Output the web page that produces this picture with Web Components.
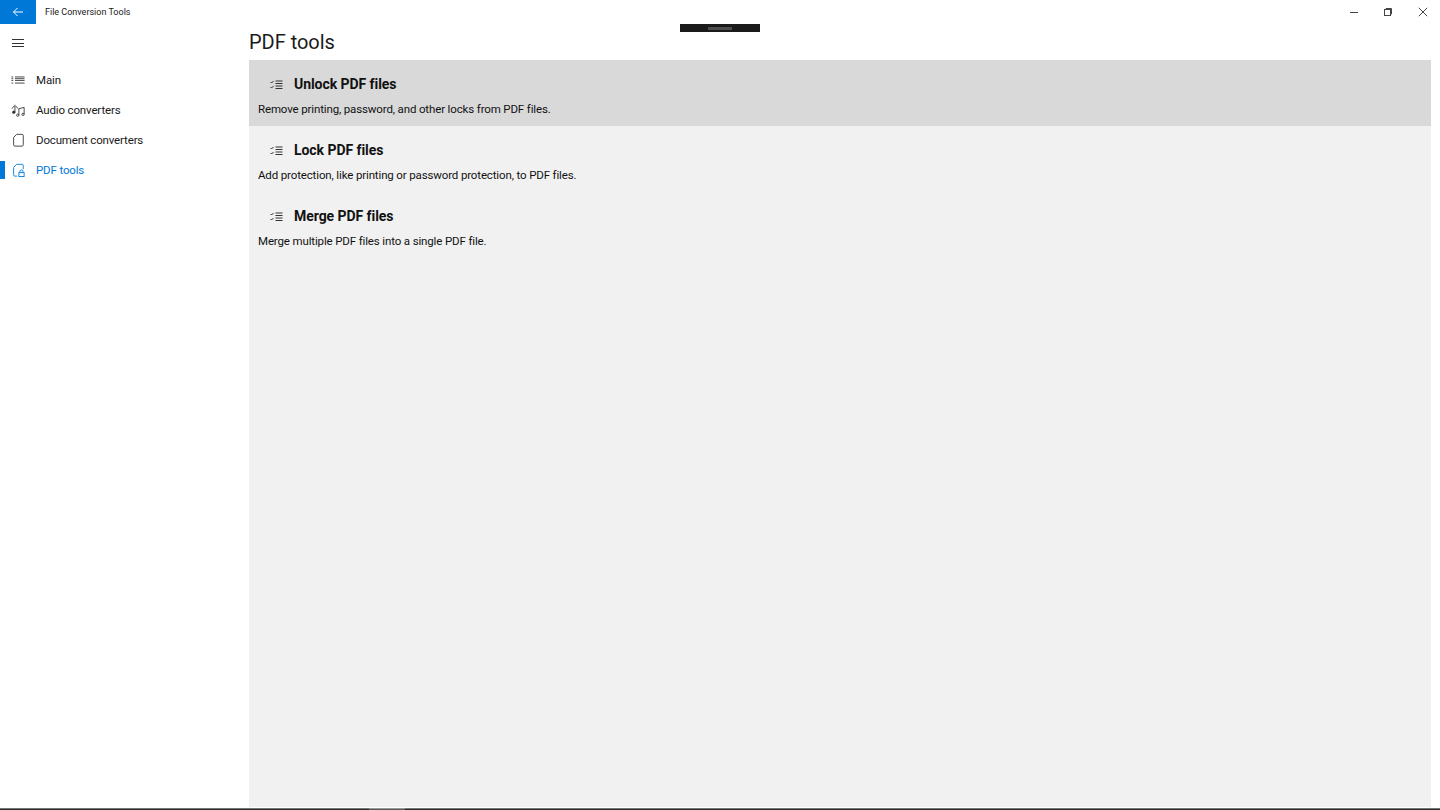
<!doctype html>
<html lang="en"><head><meta charset="utf-8"><title>File Conversion Tools</title>
<style>
html,body{margin:0;height:100%;background:#fff;overflow:hidden}
body{font-family:Roboto,"Open Sans",sans-serif;color:#1a1a1a}
</style></head><body>
<app-window>
  <title-bar slot="top" label="File Conversion Tools"></title-bar>
  <nav-pane slot="nav">
    <nav-item label="Main" icon="list"></nav-item>
    <nav-item label="Audio converters" icon="music"></nav-item>
    <nav-item label="Document converters" icon="doc"></nav-item>
    <nav-item label="PDF tools" icon="lock" selected></nav-item>
  </nav-pane>
  <tools-page slot="main" heading="PDF tools">
    <tool-row heading="Unlock PDF files" desc="Remove printing, password, and other locks from PDF files." active></tool-row>
    <tool-row heading="Lock PDF files" desc="Add protection, like printing or password protection, to PDF files."></tool-row>
    <tool-row heading="Merge PDF files" desc="Merge multiple PDF files into a single PDF file."></tool-row>
  </tools-page>
</app-window>
<script>
const ICONS={
 list:'<path d="M.5 4.500h2M.5 6.500h2M.5 8.500h2M.5 11.500h2M4.500 4.500h11M4.500 6.500h11M4.500 8.500h11M4.500 11.500h11"/>',
 music:'<path d="M4.500 2v8"/><circle cx="3.200" cy="10.500" r="1.800" fill="currentColor" stroke="none"/><path d="M1 6.500l2.500-3M8 6.500l-2.500-3"/><path d="M9 6.500l6-1.500v8M9 6.500v7.500"/><circle cx="7.700" cy="14" r="1.300"/><circle cx="13.700" cy="13" r="1.300"/>',
 doc:'<path d="M6.500 1.500h6a1.500 1.500 0 0 1 1.500 1.500v10.500a1.500 1.500 0 0 1-1.500 1.500h-8a1.500 1.500 0 0 1-1.500-1.500V5z"/>',
 lock:'<path d="M7 15H4.500A1.500 1.500 0 0 1 3 13.500V5l3.500-3.500h6A1.500 1.500 0 0 1 14 3v4"/><rect x="9" y="11" width="6" height="4.500"/><path d="M10.300 11V9.500a1.700 1.700 0 0 1 3.400 0V11"/>'
};
function def(name,html){customElements.define(name,class extends HTMLElement{
  connectedCallback(){if(this.shadowRoot)return;const r=this.attachShadow({mode:'open'});r.innerHTML=html(this);}
});}
def('app-window',()=>`<style>
:host{display:flex;flex-direction:column;width:1440px;height:810px;position:relative;overflow:hidden;background:#fff}
.top{flex:none}
.body{flex:1;min-height:0;display:flex;padding-bottom:1px}
.nav{flex:none;width:249px}
.main{flex:1;min-width:0;padding-right:9px}
.task{flex:none;height:2px;background:linear-gradient(#777 0 1px,#2b2b2b 1px);display:flex;padding-left:369px}
.task i{display:block;width:36px;background:linear-gradient(#999 0 1px,#5a5a5a 1px)}
.grip{position:absolute;left:680px;top:24px;width:80px;height:8px;background:#1a1a1a;display:flex;align-items:center;justify-content:center}
.grip i{display:block;width:24px;height:3px;background:#4d4d4d}
</style>
<div class="top"><slot name="top"></slot></div>
<div class="body"><div class="nav"><slot name="nav"></slot></div><div class="main"><slot name="main"></slot></div></div>
<div class="task"><i></i></div>
<div class="grip"><i></i></div>`);
def('title-bar',h=>`<style>
:host{display:flex;height:24px;align-items:stretch;color:#1a1a1a}
.back{width:36px;background:#0078d7;display:flex;align-items:center;justify-content:center}
.t{margin-left:9px;display:flex;align-items:center;flex:1;font-size:9px;padding-bottom:1px;box-sizing:border-box}
.b{width:34.500px;display:flex;align-items:center;justify-content:center;color:#444}
svg{display:block;fill:none;stroke:currentColor;stroke-width:1}
</style>
<div class="back"><svg width="12" height="12" viewBox="0 0 12 12" style="color:#fff"><path d="M11 6H1.500M5.500 2L1.500 6l4 4"/></svg></div>
<div class="t">${h.getAttribute('label')}</div>
<div class="b"><svg width="10" height="10" viewBox="0 0 10 10"><path d="M1 5.500h8"/></svg></div>
<div class="b"><svg width="10" height="10" viewBox="0 0 10 10"><rect x="1.500" y="2.500" width="6" height="6"/><path d="M3 2.500V1.500h5.500V7H7.500"/></svg></div>
<div class="b"><svg width="10" height="10" viewBox="0 0 10 10"><path d="M.8.8l8.400 8.400M9.200.8L.8 9.200"/></svg></div>`);
def('nav-pane',()=>`<style>
:host{display:block}
.menu{height:36px;display:flex;align-items:center;padding-left:12px}
.menu svg{display:block;fill:none;stroke:#333;stroke-width:1}
.list{padding-top:5px;display:flex;flex-direction:column}
</style>
<div class="menu"><svg width="12" height="12" viewBox="0 0 12 12" style="margin-top:1px"><path d="M0 2.500h12M0 6.500h12M0 9.500h12"/></svg></div>
<div class="list"><slot></slot></div>`);
def('nav-item',h=>{const s=h.hasAttribute('selected');return `<style>
:host{display:flex;align-items:center;height:30px;font-size:11.500px;letter-spacing:-.15px;position:relative;color:${s?'#0078d7':'#1a1a1a'}}
.ic{width:36px;flex:none;display:flex;justify-content:center}
svg{display:block;fill:none;stroke:currentColor;stroke-width:1;color:${s?'#0078d7':'#333'}}
.bar{position:absolute;left:0;top:6px;bottom:6px;width:5px;background:#0078d7}
</style>${s?'<div class="bar"></div>':''}
<div class="ic"><svg width="14" height="14" viewBox="0 0 16 16">${ICONS[h.getAttribute('icon')]}</svg></div>
<span>${h.getAttribute('label')}</span>`});
def('tools-page',h=>`<style>
:host{display:flex;flex-direction:column;height:100%}
h1{margin:0;height:36px;font-weight:400;font-size:20px;line-height:36px;letter-spacing:-.03px;color:#1a1a1a}
.list{flex:1;background:#f1f1f1;display:flex;flex-direction:column}
</style><h1>${h.getAttribute('heading')}</h1><div class="list"><slot></slot></div>`);
def('tool-row',h=>`<style>
:host{display:block;height:66px;box-sizing:border-box;padding-left:9px;background:${h.hasAttribute('active')?'#d9d9d9':'transparent'};color:#111}
.h{display:flex;align-items:center;height:36px;padding-top:12px;box-sizing:border-box;padding-left:12px}
svg{display:block;fill:none;stroke:#333;stroke-width:1;flex:none;margin-top:2px}
b{font-weight:700;font-size:14px;margin-left:11px;letter-spacing:-.06px}
p{margin:0;font-size:11.500px;letter-spacing:-.14px;line-height:18px;margin-top:4px}
</style><div class="h"><svg width="13" height="10" viewBox="0 0 13 10"><path d="M5.500 1h7M5.500 3.500h7M5.500 6h7M5.500 8.500h7M.5 2l1 1 2-2M.5 7l1 1 2-2"/></svg><b>${h.getAttribute('heading')}</b></div><p>${h.getAttribute('desc')}</p>`);
</script></body></html>
